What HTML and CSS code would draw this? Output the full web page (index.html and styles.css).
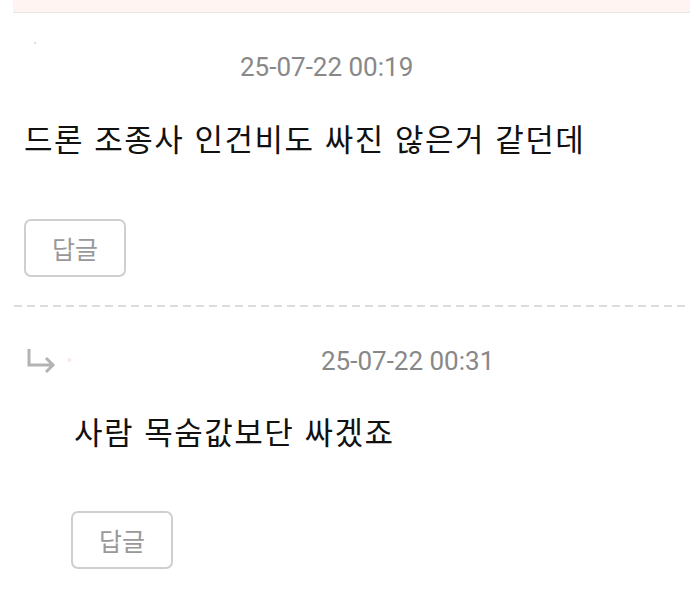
FILE: index.html
```html
<!DOCTYPE html>
<html lang="ko">
<head>
    <meta charset="UTF-8">
    <title>댓글</title>
    <link rel="stylesheet" href="styles.css">
</head>
<body>
    <div class="top-bar"></div>

    <div class="comment">
        <div class="meta">
            <span class="nick"><i class="lv"></i></span>
            <span class="date">25-07-22 00:19</span>
        </div>
        <p class="text">드론 조종사 인건비도 싸진 않은거 같던데</p>
        <button class="reply-btn">답글</button>
    </div>

    <div class="divider"></div>

    <div class="comment reply">
        <div class="meta">
            <svg class="arrow" width="30" height="28" viewBox="0 0 30 28">
                <path d="M3 2 V18 H27 M20 11 L27 18 L20 25" fill="none" stroke="#b3b3b3" stroke-width="3"/>
            </svg>
            <span class="nick"><i class="dot"></i></span>
            <span class="date">25-07-22 00:31</span>
        </div>
        <div class="body">
            <p class="text">사람 목숨값보단 싸겠죠</p>
            <button class="reply-btn">답글</button>
        </div>
    </div>
</body>
</html>
```

FILE: styles.css
```css
body {
    margin: 0;
    background-color: white;
    font-family: "Noto Sans CJK KR", "Noto Sans", sans-serif;
}
.top-bar {
    margin-left: 13px;
    height: 12px;
    background-color: #fff4f2;
    border-bottom: 1px solid #e8e8e8;
}
.comment {
    padding-left: 24px;
}
.meta {
    display: flex;
    align-items: center;
    height: 30px;
    margin-top: 39px;
}
.nick {
    width: 216px;
    height: 30px;
    position: relative;
}
.lv {
    position: absolute;
    left: 10px;
    top: -10px;
    width: 2px;
    height: 2px;
    background-color: #ddd;
}
.date {
    font-family: Roboto, "Liberation Sans", sans-serif;
    font-size: 26px;
    color: #888;
}
.text {
    margin: 36px 0 0 0;
    font-size: 31px;
    letter-spacing: 1.5px;
    line-height: 40px;
    color: #111;
}
.reply-btn {
    display: block;
    margin-top: 61px;
    width: 102px;
    height: 58px;
    background-color: white;
    border: 2px solid #cfcfcf;
    border-radius: 7px;
    font-family: "Noto Sans CJK KR", sans-serif;
    font-size: 25px;
    color: #999;
    padding: 0;
}
.divider {
    margin: 28px 0 0 14px;
    height: 2px;
    background: repeating-linear-gradient(to right, #dcdcdc 0 8px, transparent 8px 13px);
}
.reply .meta {
    margin-top: 39px;
}
.reply .arrow {
    margin-left: 2px;
}
.reply .nick {
    width: 265px;
}
.dot {
    position: absolute;
    left: 12px;
    top: 12px;
    width: 3px;
    height: 4px;
    background-color: #fde8e8;
}
.reply .body {
    padding-left: 47px;
}
.reply .text {
    margin-top: 35px;
    padding-left: 3px;
}
.reply .reply-btn {
    margin-top: 60px;
}
```
